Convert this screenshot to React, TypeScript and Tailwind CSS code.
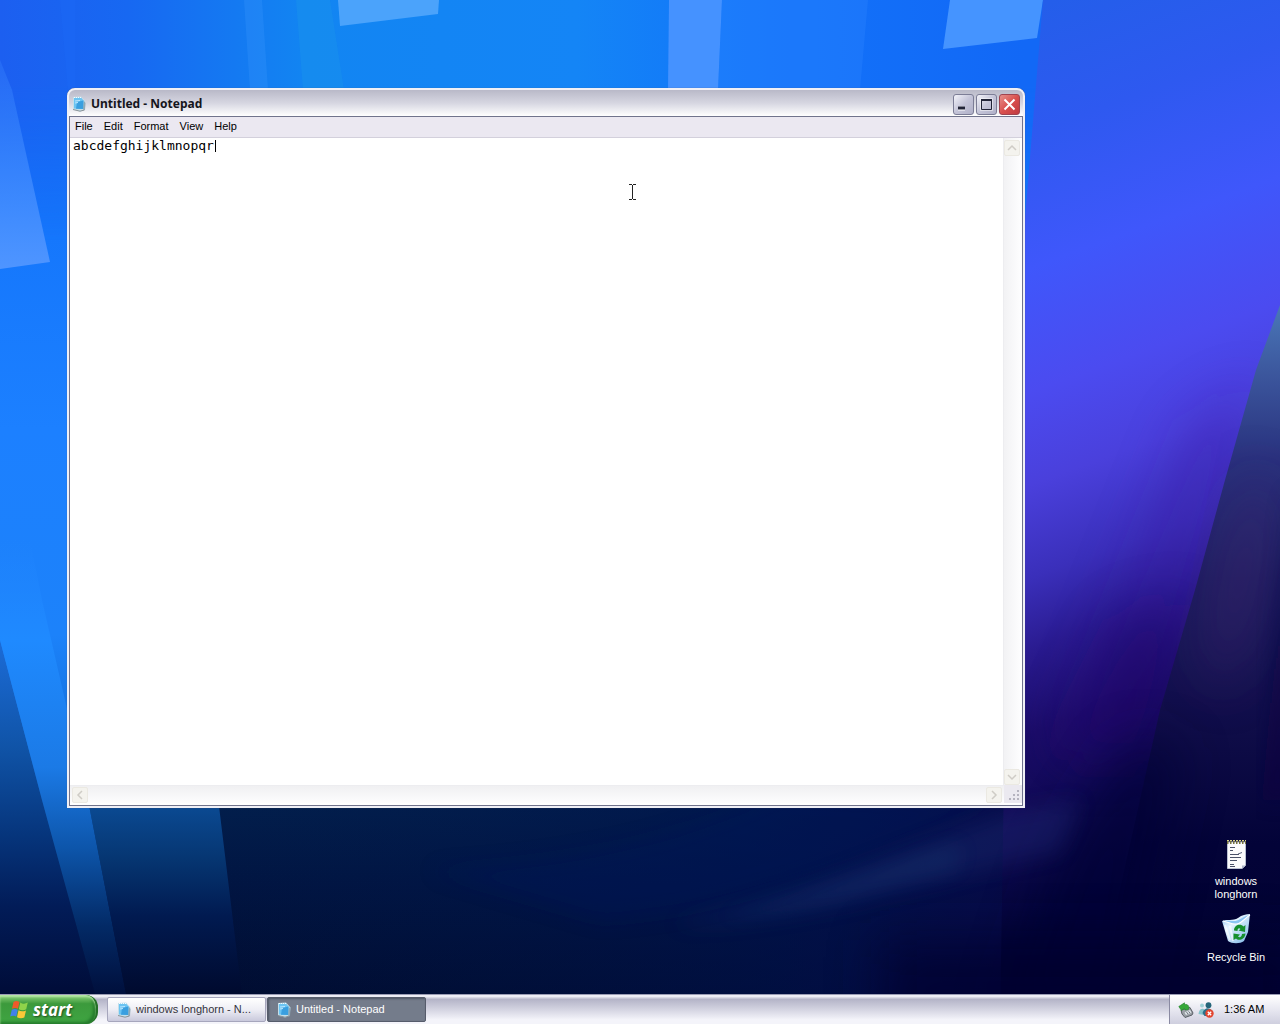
import { useState } from 'react';

const menus = ['File', 'Edit', 'Format', 'View', 'Help'];

const tasks = [
  { title: 'windows longhorn - N...', active: false },
  { title: 'Untitled - Notepad', active: true },
];

function Wallpaper() {
  return (
    <svg className="absolute inset-0 h-full w-full" viewBox="0 0 1280 1024" preserveAspectRatio="none" aria-hidden="true">
      <defs>
        <linearGradient id="base" x1="0" y1="0" x2="0" y2="1">
          <stop offset="0" stopColor="#1268f2" />
          <stop offset=".15" stopColor="#1273fb" />
          <stop offset=".42" stopColor="#1c80ff" />
          <stop offset=".62" stopColor="#1c82fa" />
          <stop offset=".72" stopColor="#1270dc" />
          <stop offset=".8" stopColor="#0a4590" />
          <stop offset=".9" stopColor="#011548" />
          <stop offset="1" stopColor="#000828" />
        </linearGradient>
        <linearGradient id="top" x1="0" y1="0" x2="1" y2="0">
          <stop offset="0" stopColor="#1c5ff0" />
          <stop offset=".1" stopColor="#1768f2" />
          <stop offset=".24" stopColor="#1285f2" />
          <stop offset=".45" stopColor="#1485f6" />
          <stop offset=".6" stopColor="#1273fa" />
          <stop offset=".8" stopColor="#1268f6" />
        </linearGradient>
        <linearGradient id="topfade" x1="0" y1="0" x2="0" y2="1">
          <stop offset="0" stopColor="#fff" />
          <stop offset=".35" stopColor="#fff" />
          <stop offset="1" stopColor="#000" />
        </linearGradient>
        <mask id="topmask">
          <rect width="1280" height="240" fill="url(#topfade)" />
        </mask>
        <linearGradient id="pane" x1="0" y1="0" x2="0" y2="1">
          <stop offset="0" stopColor="#3a86ff" stopOpacity=".3" />
          <stop offset="1" stopColor="#4f95ff" />
        </linearGradient>
        <linearGradient id="right" x1=".2" y1="0" x2=".3" y2="1">
          <stop offset="0" stopColor="#245eea" />
          <stop offset=".12" stopColor="#2e59f0" />
          <stop offset=".25" stopColor="#3f57fb" />
          <stop offset=".37" stopColor="#4b4bf0" />
          <stop offset=".46" stopColor="#4a40dc" />
          <stop offset=".55" stopColor="#3a2fba" />
          <stop offset=".62" stopColor="#2a1b90" />
          <stop offset=".7" stopColor="#1c0d68" />
          <stop offset=".8" stopColor="#0e0a50" />
          <stop offset=".9" stopColor="#010436" />
          <stop offset="1" stopColor="#00042c" />
        </linearGradient>
        <linearGradient id="wedge" gradientUnits="userSpaceOnUse" x1="0" y1="305" x2="0" y2="1024">
          <stop offset="0" stopColor="#4a78b8" />
          <stop offset=".1" stopColor="#3b559c" />
          <stop offset=".22" stopColor="#28307c" />
          <stop offset=".38" stopColor="#1c1c60" />
          <stop offset=".55" stopColor="#120f4c" />
          <stop offset=".75" stopColor="#030338" />
          <stop offset="1" stopColor="#00022e" />
        </linearGradient>
        <linearGradient id="deep" x1="0" y1="0" x2="0" y2="1">
          <stop offset="0" stopColor="#02204e" />
          <stop offset=".4" stopColor="#011542" />
          <stop offset="1" stopColor="#000a2c" />
        </linearGradient>
        <linearGradient id="deepx" x1="0" y1="0" x2="1" y2="0">
          <stop offset="0" stopColor="#00194a" stopOpacity="0" />
          <stop offset=".6" stopColor="#00114e" stopOpacity=".5" />
          <stop offset="1" stopColor="#0a0748" />
        </linearGradient>
        <linearGradient id="shade" gradientUnits="userSpaceOnUse" x1="0" y1="640" x2="0" y2="994">
          <stop offset="0" stopColor="#1c6cd8" />
          <stop offset=".3" stopColor="#1054a8" />
          <stop offset=".55" stopColor="#06357c" />
          <stop offset=".75" stopColor="#021c58" />
          <stop offset="1" stopColor="#000c38" />
        </linearGradient>
        <linearGradient id="beam" gradientUnits="userSpaceOnUse" x1="0" y1="540" x2="0" y2="994">
          <stop offset="0" stopColor="#2286ff" stopOpacity="0" />
          <stop offset=".22" stopColor="#1f8aff" />
          <stop offset=".5" stopColor="#1b7ae6" />
          <stop offset=".68" stopColor="#0d55aa" />
          <stop offset=".85" stopColor="#032a66" />
          <stop offset="1" stopColor="#000f3c" />
        </linearGradient>
        <linearGradient id="panel" gradientUnits="userSpaceOnUse" x1="0" y1="800" x2="0" y2="994">
          <stop offset="0" stopColor="#0b4c96" />
          <stop offset=".3" stopColor="#063672" />
          <stop offset=".6" stopColor="#011a50" />
          <stop offset="1" stopColor="#000a2e" />
        </linearGradient>
        <filter id="soft" x="-20%" y="-50%" width="140%" height="200%"><feGaussianBlur stdDeviation="10" /></filter>
        <filter id="wide" x="-60%" y="-60%" width="220%" height="220%"><feGaussianBlur stdDeviation="26" /></filter>
      </defs>

      <rect width="1280" height="1024" fill="url(#base)" />
      <rect width="1280" height="240" fill="url(#top)" mask="url(#topmask)" />

      {/* light panes along the top and left edges */}
      <path d="M0 60 12 90 50 262 0 269Z" fill="url(#pane)" />
      <path d="M60 0H75V90H68Z" fill="#1f6dff" opacity=".2" />
      <path d="M244 0H262L268 90H250Z" fill="#4aa0ff" opacity=".22" />
      <path d="M296 0H330L344 90H303Z" fill="#21a0e8" opacity=".25" />
      <path d="M338 0H439L438 14 340 26Z" fill="#4ba3fb" />
      <path d="M669 0H722L718 90H668Z" fill="#4592ff" />
      <path d="M722 0H868L860 90H718Z" fill="#3388ff" opacity=".3" />
      <path d="M950 0H1043L1037 38 943 49Z" fill="#4594ff" />

      {/* bottom left beams */}
      <path d="M0 640 42 800 95 994V1024H0Z" fill="url(#shade)" />
      <path d="M0 540H30L42 600 88 800 126 994V1024H95V994L42 800 0 640Z" fill="url(#beam)" />
      <path d="M86 790H217L242 994V1024H126V994Z" fill="url(#panel)" />

      {/* dark floor */}
      <path d="M217 790H1100V1024H242V994Z" fill="url(#deep)" />
      <path d="M217 790H1100V1024H242V994Z" fill="url(#deepx)" />
      <path d="M430 870C600 860 700 830 780 790L1000 800C900 840 760 910 600 920Z" fill="#00135a" opacity=".35" filter="url(#soft)" />

      {/* violet field */}
      <path d="M1043 0H1280V1024H1000L1010 400Z" fill="url(#right)" />
      <path d="M1190 420 1260 380 1180 640 1110 760 1060 740Z" fill="#3a12a0" opacity=".35" filter="url(#wide)" />
      <path d="M1120 620 1190 600 1150 760H1050Z" fill="#16045c" opacity=".5" filter="url(#wide)" />
      <path d="M1280 305 1256 370 1225 480 1195 590 1160 710 1090 1024H1280Z" fill="url(#wedge)" />
      <ellipse cx="1240" cy="580" rx="22" ry="110" transform="rotate(12 1240 580)" fill="#40286e" opacity=".55" filter="url(#wide)" />
      <path d="M1290 480V800H1262Z" fill="#0d0440" opacity=".6" filter="url(#soft)" />
      <path d="M1130 740 1180 750 1120 1024H1000L1060 850Z" fill="#030535" opacity=".65" filter="url(#wide)" />
      <rect x="880" y="940" width="420" height="120" fill="#00052f" opacity=".7" filter="url(#wide)" />

      <path d="M670 925C820 890 920 838 1010 812L1080 800 1060 852C960 870 830 922 670 925Z" fill="#24327d" opacity=".3" filter="url(#soft)" />
      <path d="M720 918C830 893 900 860 960 845L955 868C880 880 820 905 720 918Z" fill="#1c4b78" opacity=".25" filter="url(#soft)" />
    </svg>
  );
}

function NotepadIcon() {
  return (
    <svg className="h-4 w-4 shrink-0" viewBox="0 0 16 16" aria-hidden="true">
      <path d="M2 1 10 .5 14.500 5.500 13.500 14 9 15.500 2 13.500Z" fill="#c4dfea" />
      <path d="M3 2 10 1.500 12.500 4.500 12.500 13 3 12.500Z" fill="#6cc4f2" />
      <path d="M6 6 12.500 4.500 12.500 13 5 12.800Z" fill="#3a9fdf" />
      <path d="M12 13.500 13 5 14.500 7 14 14Z" fill="#8fa9b6" />
      <path d="M2 13.500 9 15.200 13.500 14" stroke="#8a9297" fill="none" />
      <path d="M3 1.500H10" stroke="#f2fcff" strokeDasharray="1 1" />
      <path d="M4 5 9 4.500M4 7 7 6.500" stroke="#bce7ff" />
    </svg>
  );
}

function TextFileIcon() {
  return (
    <svg className="h-8 w-8" viewBox="0 0 32 32" aria-hidden="true">
      <path d="M7.500 3H25.500V26.500L22 29.500H7.500Z" fill="#fbfbfc" stroke="#b8bfd0" />
      <path d="M25.500 26.500 22 29.500V26.500Z" fill="#aeb6c8" />
      <path d="M7 3.500H26" stroke="#77733f" strokeWidth="3" strokeDasharray="1.500 1.500" />
      <path d="M7 1.500H26" stroke="#d6d18b" strokeDasharray="2 1" />
      <path d="M10 8.500H15M10 11.500H13M10 15.500H19M10 18.500H21M10 21.500H17M10 25.500H14M10 27.500H15" stroke="#4a5168" />
      <path d="M18 15 22 13.500" stroke="#5b637c" />
    </svg>
  );
}

function RecycleIcon() {
  return (
    <svg className="h-8 w-8" viewBox="0 0 32 32" aria-hidden="true">
      <defs>
        <linearGradient id="bin" x1="0" y1="0" x2="1" y2="1">
          <stop offset="0" stopColor="#8fc4f0" />
          <stop offset=".35" stopColor="#e5f5ff" />
          <stop offset="1" stopColor="#78b2e4" />
        </linearGradient>
      </defs>
      <path d="M2 8C7 6 13 8 18 5 22 2 26 1 30 1L28 19 24 28C20 31 12 31 8 28Z" fill="url(#bin)" />
      <path d="M4 8.500C10 9.500 13 12 18 10.500 23 9 25 5 29 2.500 24 3 21 6 17 7.500 13 9 9 7 4 8.500Z" fill="#8cc6f3" />
      <path d="M3 8C9 9 12 12 17 11 22 10 25 5 30 2" fill="none" stroke="#fff" strokeWidth="1.200" />
      <path d="M5 12 10 27M10 13 13 28" stroke="#fff" strokeWidth="2" opacity=".6" />
      <path d="M14 17.500C14 11.500 21 10.500 23.500 13.500L25.500 12 25 19 18.500 17.500 20.500 16C19 14.500 17.500 15.500 17.500 18Z" fill="#16902c" />
      <path d="M25.500 20.500C25 27 18 28 16 25.500L13.500 27 13.500 20.500 20 21.500 18 23.500C19.500 25 22 24 22 21Z" fill="#16902c" />
    </svg>
  );
}

function WindowsFlag() {
  return (
    <svg className="h-5 w-5 shrink-0" viewBox="0 0 20 20" aria-hidden="true">
      <path d="M4.500 2C6.500 .5 8.500 .8 10.500 2L9 8.800C7 7.600 5 7.800 3 8.800Z" fill="#ef5a2a" />
      <path d="M11.300 2.500C13.300 4 16 4.200 18.800 2.600L17.200 9.300C14.800 10.800 12 10.300 9.800 9.200Z" fill="#8fd34a" />
      <path d="M2.800 9.800C4.800 8.600 6.800 8.600 8.800 9.800L7.200 16.500C5.200 15.300 3.200 15.500 1.200 16.500Z" fill="#4281ea" />
      <path d="M9.500 10.300C11.700 11.700 14.300 11.700 17 10.400L15.300 17.500C12.800 18.700 10.300 18.500 8 17.200Z" fill="#fbc838" />
    </svg>
  );
}

function RemoveHardwareIcon() {
  return (
    <svg className="h-4 w-4" viewBox="0 0 16 16" aria-hidden="true">
      <path d="M3 8 12 5.500 15 11 14 13 7 15.500 4 12Z" fill="#9a9fa5" stroke="#5a5f66" />
      <path d="M6.500 10.500 12 8 13.500 10.500 8 13Z" fill="#dfe5ea" />
      <path d="M8.500 10 10 12M10.500 9.300 12 11" stroke="#6b7078" />
      <path d="M.8 4.500 6.500 .8 6.500 2.500C10.500 2 11.500 4.500 10.500 7.500L7 8 6.500 6.500 3.500 8.500Z" fill="#35a838" stroke="#1d7d25" strokeWidth=".6" />
    </svg>
  );
}

function MessengerIcon() {
  return (
    <svg className="h-4 w-4" viewBox="0 0 16 16" aria-hidden="true">
      <circle cx="4" cy="3.500" r="2" fill="#9dd0d6" />
      <path d="M.5 12C1 6.500 5 5.500 7.500 8.500L6 13Z" fill="#86c3ca" />
      <circle cx="10.500" cy="3.200" r="2.900" fill="#246579" />
      <path d="M4.500 11C6.500 5 12.500 5 14.500 10L12 14H6.500Z" fill="#2b718b" />
      <circle cx="11.500" cy="11.500" r="4.200" fill="#e2452f" />
      <path d="M9.800 9.800 13.200 13.200M13.200 9.800 9.800 13.200" stroke="#fff" strokeWidth="1.300" />
    </svg>
  );
}

function Arrow({ d, label }: { d: string; label: string }) {
  return (
    <button
      type="button"
      aria-label={label}
      className="flex h-4 w-4 shrink-0 items-center justify-center rounded-xs border border-[#ebe9e2] bg-[#f4f3ee]"
    >
      <svg className="h-3 w-3" viewBox="0 0 12 12" fill="none" stroke="#cfccc6" strokeWidth="1.500">
        <path d={d} />
      </svg>
    </button>
  );
}

function NotepadWindow() {
  const [text, setText] = useState('abcdefghijklmnopqr');

  return (
    <section className="absolute top-[88px] right-[255px] bottom-[186px] left-[67px] flex flex-col rounded-t-lg border-2 border-[#f0f0f6] bg-[#f0f0f6] shadow-[0_0_1px_#4a5170]">
      <header className="flex h-[26px] shrink-0 items-center rounded-t-md bg-linear-to-b from-[#b9b9c8] via-[#d6d6e1] to-white pt-0.5 pr-[3px] pl-0.5">
        <NotepadIcon />
        <h1 className="ml-1 grow font-['Noto_Sans',sans-serif] text-xs font-bold text-[#15151c]">Untitled - Notepad</h1>
        <div className="flex gap-0.5">
          <button
            type="button"
            aria-label="Minimize"
            className="h-[21px] w-[21px] rounded-[3px] border border-[#7c7d96] bg-linear-to-br from-[#f4f4fa] via-[#c4c4d8] to-[#b0b0c8]"
          >
            <svg viewBox="0 0 19 19" className="h-full w-full">
              <path d="M4 13.500H11" stroke="#fff" strokeWidth="4" />
              <path d="M4 13H11" stroke="#222438" strokeWidth="3" />
            </svg>
          </button>
          <button
            type="button"
            aria-label="Maximize"
            className="h-[21px] w-[21px] rounded-[3px] border border-[#7c7d96] bg-linear-to-br from-[#f4f4fa] via-[#c4c4d8] to-[#b0b0c8]"
          >
            <svg viewBox="0 0 19 19" className="h-full w-full" fill="none">
              <path d="M4.500 4.500H14.500V14.500H4.500Z" stroke="#222438" />
              <path d="M4 5H15" stroke="#222438" strokeWidth="2" />
              <path d="M3.500 3.500H15.500V15.500H3.500Z" stroke="#fff" opacity=".5" />
            </svg>
          </button>
          <button
            type="button"
            aria-label="Close"
            className="h-[21px] w-[21px] rounded-[3px] border border-[#a04450] bg-linear-to-br from-[#e58f8c] via-[#d9504e] to-[#c03a40]"
          >
            <svg viewBox="0 0 19 19" className="h-full w-full">
              <path d="M4.500 4.500 14.500 14.500M14.500 4.500 4.500 14.500" stroke="#fff" strokeWidth="2" />
            </svg>
          </button>
        </div>
      </header>

      <div className="flex min-h-0 grow flex-col border border-[#70738c] bg-white pb-0.5">
        <nav className="flex h-[21px] shrink-0 items-center gap-[11px] border-b border-[#d3d0dc] bg-[#ebe8f1] px-[5px] pb-0.5">
          {menus.map((m) => (
            <button key={m} type="button" className="text-[11px] leading-4 text-black">
              {m}
            </button>
          ))}
        </nav>

        <div className="flex min-h-0 grow bg-white pr-0.5">
          <div className="relative grow font-['DejaVu_Sans_Mono',monospace] text-[13px]">
            <textarea
              aria-label="Document"
              spellCheck={false}
              value={text}
              onChange={(e) => setText(e.target.value)}
              className="block h-full w-full resize-none overflow-hidden bg-white px-[3px] leading-4 text-black outline-none"
            />
            <span className="absolute top-0.5 left-[calc(18ch+4px)] h-3 w-px bg-black" />
          </div>
          <div className="flex w-[17px] flex-col items-center justify-between border-l border-[#ededf0] bg-linear-to-r from-[#f2f2f4] to-[#fdfdfe] pt-0.5">
            <Arrow label="Scroll up" d="M2 8 6 4 10 8" />
            <Arrow label="Scroll down" d="M2 4 6 8 10 4" />
          </div>
        </div>

        <div className="flex h-[18px] shrink-0 bg-white">
          <div className="flex grow items-center justify-between border-t border-[#ededf0] bg-linear-to-b from-[#f0f0f2] to-[#fdfdfe] px-0.5">
            <Arrow label="Scroll left" d="M8 2 4 6 8 10" />
            <Arrow label="Scroll right" d="M4 2 8 6 4 10" />
          </div>
          <svg className="h-[18px] w-[18px] bg-[#ebe9f0]" viewBox="0 0 18 18" fill="#b5b3bf" aria-hidden="true">
            <path d="M13 5h2v2h-2zM9 9h2v2H9zM13 9h2v2h-2zM5 13h2v2H5zM9 13h2v2H9zM13 13h2v2h-2z" />
          </svg>
        </div>
      </div>
    </section>
  );
}

function Taskbar() {
  return (
    <footer className="relative flex h-[30px] shrink-0 items-stretch border-t border-[#9a9cb4] bg-linear-to-b from-[#eeeef5] from-5% via-[#b4b4c8] via-15% to-[#f4f4fa] to-85%">
      <button
        type="button"
        className="flex w-[98px] items-center rounded-r-xl border-r-2 border-[#246f27] bg-linear-to-b from-[#8ed47c] via-[#3c9a3c] via-30% to-[#3fa542] pl-[9px] shadow-[inset_0_2px_2px_#b5e6a4,inset_-3px_-2px_3px_#247a2b]"
      >
        <WindowsFlag />
        <span className="ml-1 font-['Open_Sans',sans-serif] text-[17px] leading-5 font-bold text-white italic [text-shadow:1px_1px_2px_#1c4b1c]">
          start
        </span>
      </button>

      <div className="ml-[9px] flex grow items-center gap-px">
        {tasks.map((t) => (
          <button
            key={t.title}
            type="button"
            className={
              t.active
                ? 'flex h-[25px] w-[159px] items-center gap-1 rounded-xs border border-[#565c6b] bg-[#747c8b] px-2 text-[11px] text-white shadow-[inset_1px_1px_2px_#4e5564]'
                : 'flex h-[25px] w-[159px] items-center gap-1 rounded-xs border border-[#a6a6bc] bg-linear-to-b from-white via-[#eeeef5] to-[#c9c9dc] px-2 text-[11px] text-[#33333c]'
            }
          >
            <NotepadIcon />
            <span>{t.title}</span>
          </button>
        ))}
      </div>

      <div className="flex w-[111px] items-center gap-1 border-l border-[#8a8aa2] bg-linear-to-b from-white via-[#e8e8f1] to-[#cfcfdf] pl-2">
        <RemoveHardwareIcon />
        <MessengerIcon />
        <time className="ml-1.5 text-[11px] text-black">1:36 AM</time>
      </div>
    </footer>
  );
}

export default function App() {
  return (
    <div className="relative flex h-screen flex-col overflow-hidden bg-[#000828] font-['Liberation_Sans',sans-serif]">
      <Wallpaper />
      <main className="relative grow">
        <NotepadWindow />

        <div className="absolute right-0 bottom-[30px] flex w-[88px] flex-col items-center gap-3 text-center text-[11px] leading-[13px] text-white">
          <button type="button" className="flex flex-col items-center gap-1">
            <TextFileIcon />
            <span className="w-14">windows longhorn</span>
          </button>
          <button type="button" className="flex flex-col items-center gap-1.5">
            <RecycleIcon />
            <span>Recycle Bin</span>
          </button>
        </div>

        {/* text cursor */}
        <svg className="absolute top-[184px] left-[628px] h-4 w-[9px]" viewBox="0 0 9 16" fill="none" stroke="#222" aria-hidden="true">
          <path d="M1 .500H4M5 .500H8M4.500 1V15M1 15.500H4M5 15.500H8" />
        </svg>
      </main>
      <Taskbar />
    </div>
  );
}
